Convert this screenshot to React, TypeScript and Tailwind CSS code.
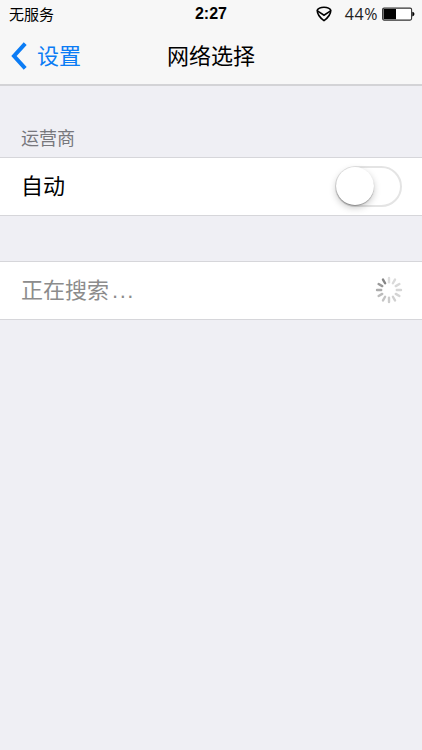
const spokes = [
    "#dedede", "#dadada", "#d8d8d8", "#d6d6d6", "#d4d4d4", "#d0d0d0",
    "#cccccc", "#c4c4c4", "#bcbcbc", "#acacac", "#9a9a9a", "#858585",
];

export default function App() {
    return (
        <div className="flex h-[750px] w-[422px] flex-col overflow-hidden bg-[#efeff4] font-['Liberation_Sans','Noto_Sans_CJK_SC',sans-serif] text-black">
            <header className="h-[86px] shrink-0 border-b-2 border-[#d3d3d6] bg-[#f7f7f7]">
                <StatusBar />
                <nav className="grid h-[56px] grid-cols-3 items-center text-[22px] leading-none">
                    <a className="flex items-center gap-[10px] pl-[11px] text-[#0b7cf5]">
                        <svg width="16" height="28" viewBox="0 0 16 28" fill="none" stroke="currentColor" strokeWidth="4">
                            <path d="M14.2 1.7 3 14l11.2 12.3" />
                        </svg>
                        <span className="pt-[2px]">设置</span>
                    </a>
                    <h1 className="pt-[2px] text-center whitespace-nowrap">网络选择</h1>
                </nav>
            </header>

            <main>
                <h2 className="flex h-[71px] items-end pb-[9px] pl-[21px] text-[18px] leading-[18px] text-[#77777c]">运营商</h2>
                <div className="flex h-[59px] items-center justify-between border-y border-[#d6d6da] bg-white pr-[20px] pb-px pl-[21px]">
                    <span className="pt-[2px] text-[22px] leading-none">自动</span>
                    <Toggle />
                </div>
                <div className="mt-[45px] flex h-[59px] items-center justify-between border-y border-[#d6d6da] bg-white pr-[19px] pb-px pl-[21px]">
                    <span className="pt-[2px] text-[22px] leading-none text-[#8c8c8c]">
                        正在搜索<span className="pl-[3px] tracking-[1.5px]">...</span>
                    </span>
                    <Spinner />
                </div>
            </main>
        </div>
    );
}

function StatusBar() {
    return (
        <div className="grid h-[28px] grid-cols-3 items-center pr-[7px] pl-[9px] text-[15px] leading-none">
            <span>无服务</span>
            <span className="pr-[2px] text-center text-[16px] font-bold">2:27</span>
            <div className="flex items-center justify-end">
                <svg className="mr-[13px]" width="16" height="16" viewBox="0 0 16 16" fill="none" stroke="black" strokeWidth="1.6">
                    <path d="M1.2 4.4Q2.5 1.2 8 1.2t6.8 3.2Q14.6 10 8 14.6 1.4 10 1.2 4.4Z" />
                    <path d="M1.4 4.8 8 9.2l6.6-4.4" />
                </svg>
                <span className="mr-[4px] font-['Open_Sans',sans-serif] text-[16px] tracking-[0.6px] text-[#222]">44%</span>
                <svg width="33" height="14" viewBox="0 0 33 14">
                    <rect x="0.6" y="1.1" width="29" height="12" rx="1.5" fill="white" stroke="#333" strokeWidth="1.1" />
                    <rect x="1.5" y="2" width="12.5" height="10.2" fill="black" />
                    <path d="M30.3 4.8q2.2.5 2.2 2.3t-2.2 2.3Z" fill="black" />
                </svg>
            </div>
        </div>
    );
}

function Toggle() {
    return (
        <button className="flex h-[41px] w-[67px] items-center rounded-full border-2 border-[#e4e4e4] bg-white" aria-label="自动">
            <span className="-ml-px h-[38px] w-[38px] shrink-0 rounded-full bg-white shadow-[0_3px_7px_rgba(0,0,0,0.22),0_1px_1px_rgba(0,0,0,0.28)]" />
        </button>
    );
}

function Spinner() {
    return (
        <svg width="28" height="28" viewBox="-14 -14 28 28" strokeWidth="2.4" strokeLinecap="round">
            {spokes.map((color, i) => (
                <line key={i} x1="0" y1="-7.8" x2="0" y2="-12" stroke={color} transform={`rotate(${i * 30})`} />
            ))}
        </svg>
    );
}
